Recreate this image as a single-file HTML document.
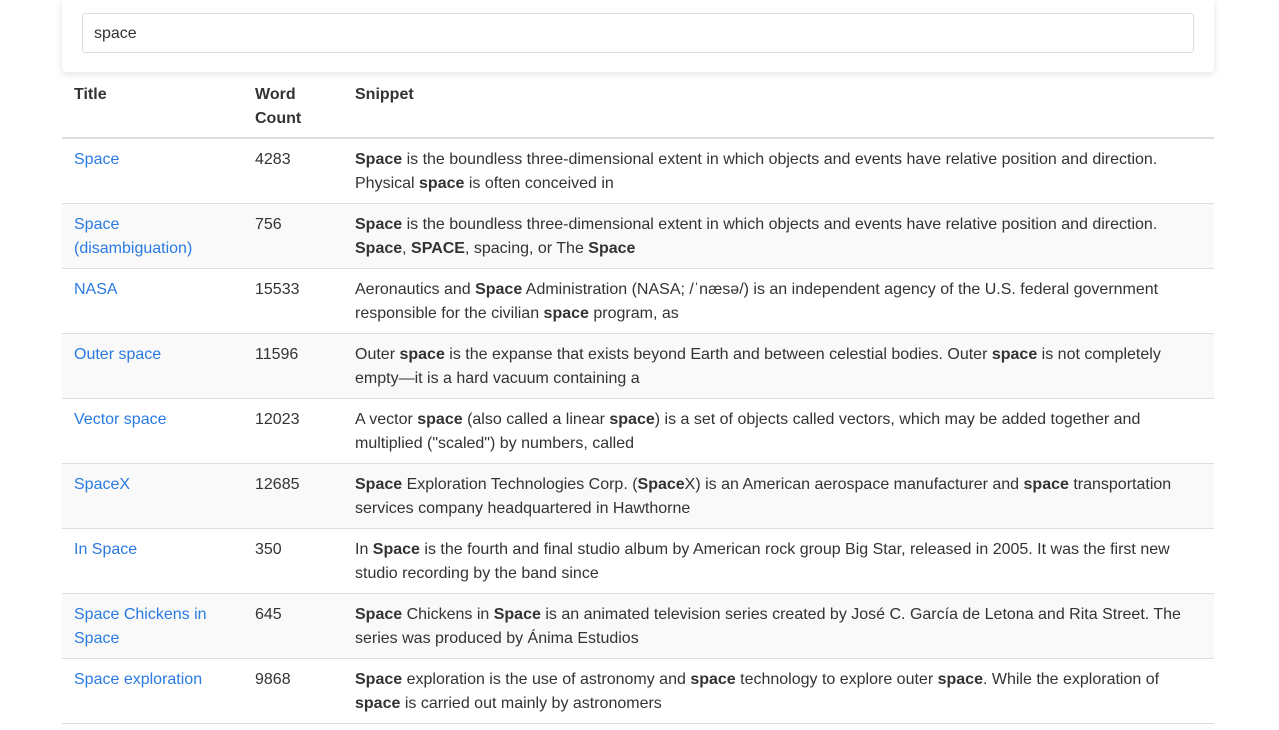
<!DOCTYPE html>
<html><head><meta charset="utf-8"><style>
body{margin:0;background:#fff;font-family:"Liberation Sans",sans-serif;font-size:16px;color:#333;}
.wrap{position:absolute;left:62px;width:1152px;top:0}
.card{height:72px;background:#fff;box-shadow:0 2px 8px rgba(0,0,0,.12);border-radius:0 0 4px 4px;position:relative}
.inp{position:absolute;left:20px;top:13px;width:1112px;height:40px;border:1px solid #ddd;border-radius:3px;box-sizing:border-box;padding:0 11px;line-height:39px;color:#333}
table{border-collapse:collapse;width:1152px;margin-top:1px}
td,th{vertical-align:top;text-align:left;padding:9px 11px 7px 12px;line-height:24px}
th{font-weight:bold;border-bottom:2px solid #ddd;padding:10px 11px 6px 12px}
td{border-bottom:1px solid #ddd}
tr.s td{background:#f9f9f9}
a{color:#2a7ae2;text-decoration:none}
.c1{width:158px}.c2{width:77px}
</style></head><body><div class="wrap">
<div class="card"><div class="inp">space</div></div>
<table>
<tr><th class="c1">Title</th><th class="c2">Word<br>Count</th><th>Snippet</th></tr>
<tr><td><a>Space</a></td><td>4283</td><td><b>Space</b> is the boundless three-dimensional extent in which objects and events have relative position and direction. Physical <b>space</b> is often conceived in</td></tr>
<tr class="s"><td><a>Space (disambiguation)</a></td><td>756</td><td><b>Space</b> is the boundless three-dimensional extent in which objects and events have relative position and direction. <b>Space</b>, <b>SPACE</b>, spacing, or The <b>Space</b></td></tr>
<tr><td><a>NASA</a></td><td>15533</td><td>Aeronautics and <b>Space</b> Administration (NASA; /ˈnæsə/) is an independent agency of the U.S. federal government responsible for the civilian <b>space</b> program, as</td></tr>
<tr class="s"><td><a>Outer space</a></td><td>11596</td><td>Outer <b>space</b> is the expanse that exists beyond Earth and between celestial bodies. Outer <b>space</b> is not completely empty—it is a hard vacuum containing a</td></tr>
<tr><td><a>Vector space</a></td><td>12023</td><td>A vector <b>space</b> (also called a linear <b>space</b>) is a set of objects called vectors, which may be added together and multiplied ("scaled") by numbers, called</td></tr>
<tr class="s"><td><a>SpaceX</a></td><td>12685</td><td><b>Space</b> Exploration Technologies Corp. (<b>Space</b>X) is an American aerospace manufacturer and <b>space</b> transportation services company headquartered in Hawthorne</td></tr>
<tr><td><a>In Space</a></td><td>350</td><td>In <b>Space</b> is the fourth and final studio album by American rock group Big Star, released in 2005. It was the first new studio recording by the band since</td></tr>
<tr class="s"><td><a>Space Chickens in Space</a></td><td>645</td><td><b>Space</b> Chickens in <b>Space</b> is an animated television series created by José C. García de Letona and Rita Street. The series was produced by Ánima Estudios</td></tr>
<tr><td><a>Space exploration</a></td><td>9868</td><td><b>Space</b> exploration is the use of astronomy and <b>space</b> technology to explore outer <b>space</b>. While the exploration of <b>space</b> is carried out mainly by astronomers</td></tr>
</table></div></body></html>
